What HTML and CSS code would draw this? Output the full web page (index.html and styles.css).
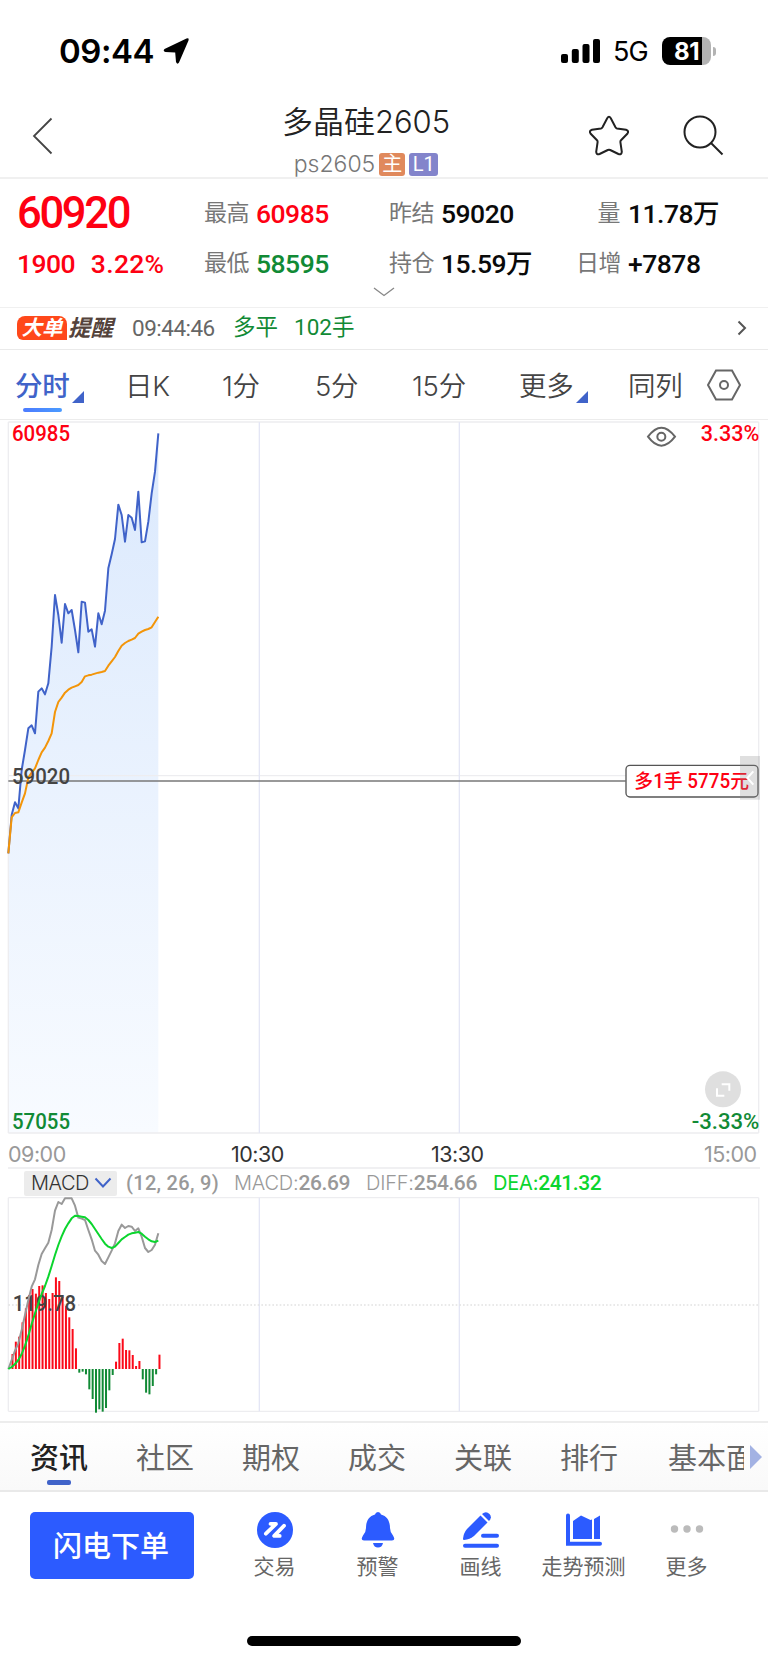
FILE: index.html
```html
<!DOCTYPE html>
<html lang="zh-CN">
<head>
    <meta charset="UTF-8">
    <meta name="viewport" content="width=device-width, initial-scale=1.0">
    <title>多晶硅2605</title>
    <link rel="stylesheet" href="styles.css">
</head>
<body>
    <div class="status-bar">
        <span class="clock">09:44</span>
        <svg class="location" width="28" height="28" viewBox="0 0 28 28"><path d="M24.500 1.500Q27.500 .5 26.500 3.500L17 25.500Q15.500 28 14 25L13.200 15.500L3.500 15Q.5 14 2.500 12Z"/></svg>
        <svg class="signal" width="40" height="26" viewBox="0 0 40 26"><rect x="0" y="16" width="7" height="9" rx="2"/><rect x="10.800" y="11" width="7" height="14" rx="2"/><rect x="21.500" y="6" width="7" height="19" rx="2"/><rect x="32" y="1" width="7" height="24" rx="2"/></svg>
        <span class="network">5G</span>
        <div class="battery"><span>81</span></div>
        <i class="battery-cap"></i>
    </div>

    <header class="header">
        <svg class="back" width="22" height="38" viewBox="0 0 22 38"><path d="M19.500 1.500L2 19L19.500 36.500"/></svg>
        <div class="title">
            <h1>多晶硅2605</h1>
            <div class="subtitle"><span class="code">ps2605</span><span class="tag tag-main">主</span><span class="tag tag-level">L1</span></div>
        </div>
        <div class="header-actions">
            <svg width="44" height="44" viewBox="0 0 44 44"><path d="M20.200 4.200Q22 1.500 23.800 4.200L28.500 13.300Q29 14.200 30 14.400L39 15.800Q42.500 17 40.300 19.800L34 26.200Q33.200 27 33.400 28.200L34.800 37.800Q34.500 41.200 31.400 40L23.200 36Q22 35.400 20.800 36L12.600 40Q9.500 41.200 9.200 37.800L10.600 28.200Q10.800 27 10 26.200L3.700 19.800Q1.500 17 5 15.800L14 14.400Q15 14.200 15.500 13.300Z"/></svg>
            <svg width="44" height="44" viewBox="0 0 44 44"><circle cx="18" cy="18" r="15.500"/><path d="M29 29L40.500 40.500"/></svg>
        </div>
    </header>

    <section class="quote">
        <div class="last-price">60920</div>
        <div class="item"><label>最高</label><b class="up">60985</b></div>
        <div class="item"><label>昨结</label><b>59020</b></div>
        <div class="item"><label>量</label><b>11.78万</b></div>
        <div class="change"><span>1900</span><span class="percent">3.22%</span></div>
        <div class="item"><label>最低</label><b class="down">58595</b></div>
        <div class="item"><label>持仓</label><b>15.59万</b></div>
        <div class="item"><label>日增</label><b>+7878</b></div>
        <svg class="expand" width="22" height="10" viewBox="0 0 22 10"><path d="M1 1L11 8.500L21 1"/></svg>
    </section>

    <section class="alert">
        <span class="alert-badge">大单</span>
        <span class="alert-name">提醒</span>
        <span class="alert-time">09:44:46</span>
        <span class="alert-type">多平</span>
        <span class="alert-count">102手</span>
        <svg width="10" height="16" viewBox="0 0 10 16"><path d="M1.500 1.500L8 8L1.500 14.500"/></svg>
    </section>

    <nav class="periods">
        <span class="active has-menu">分时</span>
        <span>日K</span>
        <span>1分</span>
        <span>5分</span>
        <span>15分</span>
        <span class="has-menu">更多</span>
        <span>同列</span>
        <svg width="36" height="32" viewBox="0 0 36 32"><path d="M10 1.500H26L34 16L26 30.500H10L2 16Z"/><circle cx="18" cy="16" r="4"/></svg>
    </nav>

    <!-- chart coordinates are in thirds of a pixel -->
    <svg class="chart" width="768" height="714" viewBox="0 0 2304 2142">
        <defs>
            <linearGradient id="area" x1="0" y1="0" x2="0" y2="1">
                <stop offset="0" stop-color="#dbe9fd"/>
                <stop offset="1" stop-color="#f8fbff"/>
            </linearGradient>
        </defs>
        <polygon id="priceArea" fill="url(#area)"/>
        <g class="grid">
            <path d="M25 6V2139M2276 6V2139M25 6H2276M25 2139H2276M25 1067H2276"/>
            <path class="session" d="M778 6V2139M1378 6V2139"/>
        </g>
        <path class="cost-line" d="M25 1083H1877"/>
        <polyline id="price" class="price-line"/>
        <polyline id="average" class="average-line"/>
        <text class="up" x="36" y="62" textLength="174" lengthAdjust="spacingAndGlyphs">60985</text>
        <text class="up" x="2102" y="62" textLength="176" lengthAdjust="spacingAndGlyphs">3.33%</text>
        <text class="mid" x="36" y="1091" textLength="174" lengthAdjust="spacingAndGlyphs">59020</text>
        <text class="down" x="36" y="2126" textLength="174" lengthAdjust="spacingAndGlyphs">57055</text>
        <text class="down" x="2075" y="2126" textLength="203" lengthAdjust="spacingAndGlyphs">-3.33%</text>
        <g class="eye">
            <path d="M1944 50Q1984 -4 2025 50Q1984 104 1944 50Z"/>
            <circle cx="1984" cy="50" r="12"/>
        </g>
        <rect class="position-box" x="1878" y="1036" width="396" height="95" rx="12"/>
        <text class="position-text" x="1903" y="1105" textLength="344" lengthAdjust="spacingAndGlyphs">多1手 5775元</text>
        <path class="drawer" d="M2220 1008H2280V1139H2220Z"/>
        <path class="drawer-arrow" d="M2260 1054L2242 1074L2260 1094"/>
        <circle class="zoom-bg" cx="2169" cy="2008" r="54"/>
        <path class="zoom-icon" d="M2165 1993H2188V2012M2151 2005V2027H2173"/>
    </svg>

    <div class="time-axis">
        <span>09:00</span>
        <span class="inner">10:30</span>
        <span class="inner">13:30</span>
        <span>15:00</span>
    </div>

    <div class="indicator">
        <div class="indicator-name">MACD<svg width="18" height="12" viewBox="0 0 18 12"><path d="M1.500 1.500L9 9.500L16.500 1.500"/></svg></div>
        <span class="params">(12, 26, 9)</span>
        <span class="macd">MACD:<b>26.69</b></span>
        <span class="diff">DIFF:<b>254.66</b></span>
        <span class="dea">DEA:<b>241.32</b></span>
    </div>

    <svg class="chart" width="768" height="217" viewBox="0 51 2304 651">
        <g class="grid">
            <path d="M25 53V694M2276 53V694M25 53H2276M25 694H2276"/>
            <path class="session" d="M778 53V694M1378 53V694"/>
            <path class="dotted" d="M25 375H2276"/>
        </g>
        <g id="bars"></g>
        <text class="mid" x="38" y="393" textLength="190" lengthAdjust="spacingAndGlyphs">119.78</text>
        <polyline id="diff" class="diff-line"/>
        <polyline id="dea" class="dea-line"/>
    </svg>

    <nav class="info-tabs">
        <div class="info-list">
            <span class="active">资讯</span>
            <span>社区</span>
            <span>期权</span>
            <span>成交</span>
            <span>关联</span>
            <span>排行</span>
            <span>基本面</span>
        </div>
        <i class="more-arrow"></i>
    </nav>

    <footer class="toolbar">
        <button class="order-btn">闪电下单</button>
        <div class="tool">
            <svg width="40" height="38" viewBox="0 0 40 38"><circle cx="20" cy="19" r="18"/><path class="cut" d="M15.500 12.900H21L10.900 22.700M29 14.700L19.200 24.900H24.700"/></svg>
            <span>交易</span>
        </div>
        <div class="tool">
            <svg width="40" height="38" viewBox="0 0 40 38"><path d="M20 1Q22.500 1 23 3.500C29 5 32 10 32 17Q32 21 35 24.500Q38 29.500 34 29.500H6Q2 29.500 5 24.500Q8 21 8 17C8 10 11 5 17 3.500Q17.500 1 20 1ZM15 32H25Q24 36.500 20 36.500Q16 36.500 15 32Z"/></svg>
            <span>预警</span>
        </div>
        <div class="tool">
            <svg width="40" height="38" viewBox="0 0 40 38"><path d="M19.500 4.500L26.500 11.500L13 25Q9 28.500 3 29Q2 29 2 28Q2.500 22 6 18Z"/><path d="M21 3Q25 -.5 28.500 3Q31.500 6.500 28 10Z"/><rect x="20" y="22.700" width="18" height="4" rx="2"/><rect x="2" y="32.700" width="36" height="4" rx="2"/></svg>
            <span>画线</span>
        </div>
        <div class="tool">
            <svg width="40" height="38" viewBox="0 0 40 38"><path d="M9 10L17 4.500L26.500 9L28 8.500V28H9ZM30 8L36 4.500V28H30Z"/><path class="axis" d="M4 4.500V32.800H36"/></svg>
            <span>走势预测</span>
        </div>
        <div class="tool">
            <svg class="dots" width="40" height="38" viewBox="0 0 40 38"><circle cx="7.500" cy="18" r="3.700"/><circle cx="20" cy="18" r="3.700"/><circle cx="32.500" cy="18" r="3.700"/></svg>
            <span>更多</span>
        </div>
    </footer>
    <div class="home-bar"></div>

    <script>
        var price = [1300, 1185, 1147, 1165, 1050, 990, 925, 916, 940, 815, 805, 823, 790, 680, 525, 585, 668, 552, 580, 570, 630, 697, 545, 548, 635, 628, 680, 580, 613, 572, 445, 403, 357, 254, 285, 365, 285, 293, 330, 215, 367, 364, 305, 220, 155, 40];
        var average = [1300, 1192, 1179, 1177, 1148, 1120, 1073, 1058, 1045, 1020, 997, 983, 963, 940, 876, 846, 833, 818, 809, 803, 799, 795, 786, 769, 766, 764, 761, 758, 756, 753, 737, 724, 711, 693, 677, 669, 663, 659, 654, 641, 635, 630, 627, 622, 606, 590];
        var diff = [567, 540, 512, 490, 450, 405, 360, 320, 298, 255, 222, 205, 188, 150, 92, 66, 72, 55, 55, 55, 77, 113, 116, 120, 150, 178, 212, 224, 243, 252, 232, 212, 190, 153, 134, 144, 138, 140, 153, 145, 170, 204, 216, 210, 194, 160];
        var dea = [567, 561, 552, 540, 522, 497, 467, 432, 400, 370, 342, 318, 290, 258, 225, 195, 169, 147, 130, 115, 107, 108, 110, 112, 120, 132, 147, 162, 177, 191, 200, 204, 200, 189, 178, 171, 164, 160, 158, 156, 161, 170, 178, 184, 186, 182];
        var bars = [522, 485, 470, 427, 385, 345, 327, 341, 318, 316, 339, 357, 339, 292, 303, 350, 378, 412, 447, 505, 578, 575, 583, 628, 657, 698, 688, 695, 684, 631, 585, 545, 489, 476, 510, 511, 525, 558, 543, 598, 638, 643, 618, 583, 524];
        var zero = 567;

        function toPoints(values) {
            return values.map(function(y, i) {
                return (25 + i * 10) + ',' + y;
            }).join(' ');
        }

        document.getElementById('price').setAttribute('points', toPoints(price));
        document.getElementById('average').setAttribute('points', toPoints(average));
        document.getElementById('priceArea').setAttribute('points', toPoints(price) + ' 475,2139 25,2139');
        document.getElementById('diff').setAttribute('points', toPoints(diff));
        document.getElementById('dea').setAttribute('points', toPoints(dea));

        bars.forEach(function(y, i) {
            var rect = document.createElementNS('http://www.w3.org/2000/svg', 'rect');
            rect.setAttribute('x', 34.5 + i * 10.02);
            rect.setAttribute('y', Math.min(y, zero));
            rect.setAttribute('width', 6);
            rect.setAttribute('height', Math.abs(y - zero));
            rect.setAttribute('class', y < zero ? 'bar-up' : 'bar-down');
            document.getElementById('bars').appendChild(rect);
        });
    </script>
</body>
</html>
```
FILE: styles.css
```css
* {
    box-sizing: border-box;
}
body {
    margin: 0;
    width: 768px;
    height: 1663px;
    overflow: hidden;
    background: #fff;
    color: #444;
    font-family: Roboto, "Noto Sans CJK SC", sans-serif;
}
svg {
    display: block;
    flex: none;
    fill: none;
}
span, b, label {
    white-space: nowrap;
}
.up {
    color: #fe0012;
    fill: #fe0012;
}
.down {
    color: #118a35;
    fill: #118a35;
}

/* status bar */
.status-bar {
    display: flex;
    align-items: center;
    height: 104px;
    padding: 0 52px 2px 59px;
    color: #000;
    font-family: Inter, sans-serif;
}
.status-bar svg {
    fill: #000;
}
.clock {
    width: 103px;
    font-size: 33px;
    font-weight: 600;
    letter-spacing: -0.5px;
}
.location {
    margin-right: auto;
}
.network {
    margin: 1px 0 0 12px;
    width: 49px;
    font-size: 27px;
    letter-spacing: -0.8px;
}
.battery {
    width: 49px;
    height: 28px;
    border-radius: 8px;
    background: linear-gradient(90deg, #000 40px, #b3b3b3 40px);
    color: #fff;
    font-size: 24px;
    font-weight: 700;
    line-height: 29px;
    text-align: center;
    letter-spacing: -0.5px;
}
.battery-cap {
    width: 3px;
    height: 9px;
    margin-left: 2px;
    border-radius: 0 4px 4px 0;
    background: #b3b3b3;
}

/* header */
.header {
    display: grid;
    grid-template-columns: 200px 332px 236px;
    height: 75px;
    border-bottom: 2px solid #f0f0f0;
}
.back {
    margin: 13px 0 0 32px;
    stroke: #444;
    stroke-width: 1.8;
}
.title {
    text-align: center;
}
.title h1 {
    margin: 0;
    color: #222;
    font-family: Inter, "Noto Sans CJK SC", sans-serif;
    font-size: 31px;
    font-weight: 350;
    line-height: 36px;
    letter-spacing: 0;
}
.subtitle {
    display: flex;
    justify-content: center;
    align-items: center;
    gap: 4px;
    height: 24px;
    margin-top: 12px;
}
.code {
    color: #777;
    font-family: Inter, sans-serif;
    font-size: 23px;
    font-weight: 350;
}
.tag {
    width: 26px;
    height: 23px;
    border-radius: 3px;
    color: #fff;
    font-size: 20px;
    line-height: 23px;
}
.tag-main {
    background: #e0895c;
}
.tag-level {
    width: 29px;
    background: #8384cb;
}
.header-actions {
    display: flex;
    gap: 51px;
    padding: 10px 0 0 55px;
    stroke: #222;
    stroke-width: 2;
}

/* quote */
.quote {
    display: grid;
    grid-template-columns: 187px 185px 187px 1fr;
    grid-template-rows: 61px 39px 12px;
    align-items: center;
    height: 129px;
    padding: 4px 0 0 17px;
    border-bottom: 1px solid #f0f0f0;
}
.last-price {
    color: #fe0012;
    font-size: 43.5px;
    font-weight: 500;
    letter-spacing: -2.3px;
}
.change {
    display: flex;
    gap: 16px;
    color: #fe0012;
    font-size: 26.5px;
    font-weight: 500;
    letter-spacing: -0.6px;
}
.percent {
    letter-spacing: 0.3px;
}
.item {
    display: flex;
    align-items: center;
    gap: 8px;
}
.item label {
    width: 44px;
    color: #777;
    font-size: 23px;
    line-height: 32px;
    text-align: right;
    letter-spacing: -0.5px;
}
.item b {
    font-size: 26.5px;
    font-weight: 500;
    line-height: 32px;
    letter-spacing: -0.5px;
}
.item b:not(.up):not(.down) {
    color: #0a0a0a;
}
.expand {
    grid-column: 1 / -1;
    justify-self: center;
    margin: 6px 17px 0 0;
    stroke: #888;
    stroke-width: 1.3;
}

/* big order alert */
.alert {
    display: flex;
    align-items: center;
    height: 42px;
    padding: 0 21px 1px 17px;
    border-bottom: 1px solid #eaeaea;
    color: #118a35;
    font-size: 22.5px;
    line-height: 24px;
}
.alert-badge {
    width: 50px;
    height: 24px;
    border-radius: 8px 8px 0 6px;
    background: #ff481a;
    color: #fff;
    font-size: 20.5px;
    font-weight: 700;
    font-style: italic;
    line-height: 25px;
    text-align: center;
}
.alert-name {
    width: 65px;
    padding-left: 1px;
    color: #54433c;
    font-size: 22.5px;
    font-weight: 700;
    font-style: italic;
}
.alert-time {
    width: 101px;
    color: #666;
    letter-spacing: -0.5px;
}
.alert-type {
    width: 61px;
}
.alert-type, .alert-count {
    margin-top: -2px;
}
.alert svg {
    margin-left: auto;
    stroke: #555;
    stroke-width: 2;
}

/* period tabs */
.periods {
    display: grid;
    grid-template-columns: 110px 97px 93px 97px 107px 109px 79px 36px;
    align-items: center;
    height: 70px;
    padding: 0 0 2px 15px;
    border-bottom: 1px solid #ececec;
    font-size: 27.5px;
    font-family: Inter, "Noto Sans CJK SC", sans-serif;
    font-weight: 350;
}
.periods span {
    position: relative;
    justify-self: start;
    letter-spacing: -0.2px;
}
.periods .active {
    color: #4063c9;
    font-weight: 500;
}
.periods .active::before {
    content: "";
    position: absolute;
    left: 8px;
    bottom: -8px;
    width: 39px;
    height: 4px;
    border-radius: 2px;
    background: linear-gradient(90deg, #4c7bff, #4a9bff);
}
.has-menu::after {
    content: "";
    position: absolute;
    right: -14px;
    bottom: 1px;
    border-left: 12px solid transparent;
    border-bottom: 12px solid #4063c9;
}
.periods svg {
    margin-top: 2px;
    margin-left: -1px;
    stroke: #666;
    stroke-width: 2;
}

/* charts */
.grid path {
    stroke: #ededf0;
    stroke-width: 4;
}
.grid .session {
    stroke: #e4e6f5;
}
.grid .dotted {
    stroke: #e2e2e2;
    stroke-dasharray: 5 6;
}
.chart text {
    font-size: 67px;
    font-weight: 500;
}
.chart .mid {
    fill: #444;
}
.price-line, .average-line, .diff-line, .dea-line {
    stroke-width: 6;
    stroke-linejoin: round;
}
.price-line {
    stroke: #4063c9;
}
.average-line {
    stroke: #f39509;
}
.diff-line {
    stroke: #999;
}
.dea-line {
    stroke: #0bd52e;
}
.cost-line {
    stroke: #777;
    stroke-width: 5;
}
.eye {
    stroke: #666;
    stroke-width: 6;
}
.position-box {
    fill: #fff;
    stroke: #555;
    stroke-width: 4;
}
.chart .position-text {
    fill: #fe0012;
    font-size: 58px;
}
.drawer {
    fill: #888;
    fill-opacity: 0.27;
}
.drawer-arrow, .zoom-icon {
    stroke: #fff;
    stroke-width: 6;
}
.zoom-bg {
    fill: #dfdfdf;
}
.bar-up {
    fill: #fb0a19;
}
.bar-down {
    fill: #118a35;
}
.time-axis {
    display: grid;
    grid-template-columns: 223px 200px 273px 1fr;
    align-items: center;
    height: 35px;
    margin-left: 8px;
    margin-right: 8px;
    padding-top: 7px;
    border-bottom: 2px solid #f0f0f2;
    color: #999;
    font-family: Inter, sans-serif;
    font-size: 21.5px;
    line-height: 24px;
    letter-spacing: -0.5px;
}
.time-axis .inner {
    color: #333;
}
.indicator {
    display: flex;
    align-items: center;
    height: 28px;
    padding-left: 24px;
    color: #999;
    font-family: Inter, sans-serif;
    font-size: 20px;
    font-weight: 350;
}
.indicator > span {
    margin-top: -1px;
    letter-spacing: -0.2px;
}
.indicator b {
    font-family: Roboto, sans-serif;
    font-size: 21px;
    font-weight: 500;
    letter-spacing: -0.4px;
}
.indicator-name {
    display: flex;
    align-items: center;
    justify-content: space-between;
    width: 93px;
    height: 25px;
    padding: 0 5px 0 7px;
    border-radius: 2px;
    background: #ececec;
    color: #333;
    letter-spacing: -0.5px;
}
.indicator-name svg {
    stroke: #4063c9;
    stroke-width: 2;
}
.indicator .params {
    width: 117px;
    padding-left: 9px;
    font-family: Roboto, sans-serif;
    font-weight: 500;
    letter-spacing: 0.3px;
}
.macd {
    width: 132px;
}
.diff {
    width: 127px;
}
.dea {
    color: #0bd52e;
    font-weight: 400;
}

/* information tabs */
.info-tabs {
    display: flex;
    align-items: center;
    height: 71px;
    margin-top: 7px;
    padding-left: 30px;
    border-top: 2px solid #ededed;
    border-bottom: 2px solid #e9e9e9;
    background: linear-gradient(#fff, #f9f9f9);
}
.info-list {
    display: flex;
    width: 714px;
    height: 67px;
    overflow: hidden;
    color: #666;
    font-size: 29px;
    line-height: 72px;
}
.info-list span {
    position: relative;
    flex: none;
    width: 106px;
}
.info-list span:last-child {
    margin-left: 2px;
}
.info-list .active {
    color: #222;
    font-weight: 500;
}
.info-list .active::after {
    content: "";
    position: absolute;
    left: 17px;
    top: 57px;
    width: 24px;
    height: 5px;
    border-radius: 2px;
    background: #4063c9;
}
.more-arrow {
    margin-left: 6px;
    border: solid transparent;
    border-width: 12px 0 12px 12px;
    border-left-color: #a3b2e3;
}

/* bottom toolbar */
.toolbar {
    display: grid;
    grid-template-columns: 223px repeat(5, 103px);
    height: 144px;
    padding-top: 19px;
}
.order-btn {
    width: 164px;
    height: 67px;
    margin: 1px 0 0 30px;
    padding: 0 2px 3px 0;
    border: none;
    border-radius: 5px;
    background: #2c5bff;
    color: #fff;
    font-family: inherit;
    font-size: 29px;
    font-weight: 500;
}
.tool {
    display: flex;
    flex-direction: column;
    align-items: center;
    color: #666;
    font-size: 21px;
    line-height: 37px;
}
.tool svg {
    fill: #2c5bff;
}
.tool .cut {
    fill: none;
    stroke: #fff;
    stroke-width: 3.8;
    stroke-linecap: round;
    stroke-linejoin: round;
}
.tool .axis {
    fill: none;
    stroke: #2c5bff;
    stroke-width: 4;
    stroke-linecap: round;
}
.tool .dots {
    fill: #bbb;
}
.home-bar {
    width: 274px;
    height: 10px;
    margin: 0 auto;
    border-radius: 5px;
    background: #000;
}
```
